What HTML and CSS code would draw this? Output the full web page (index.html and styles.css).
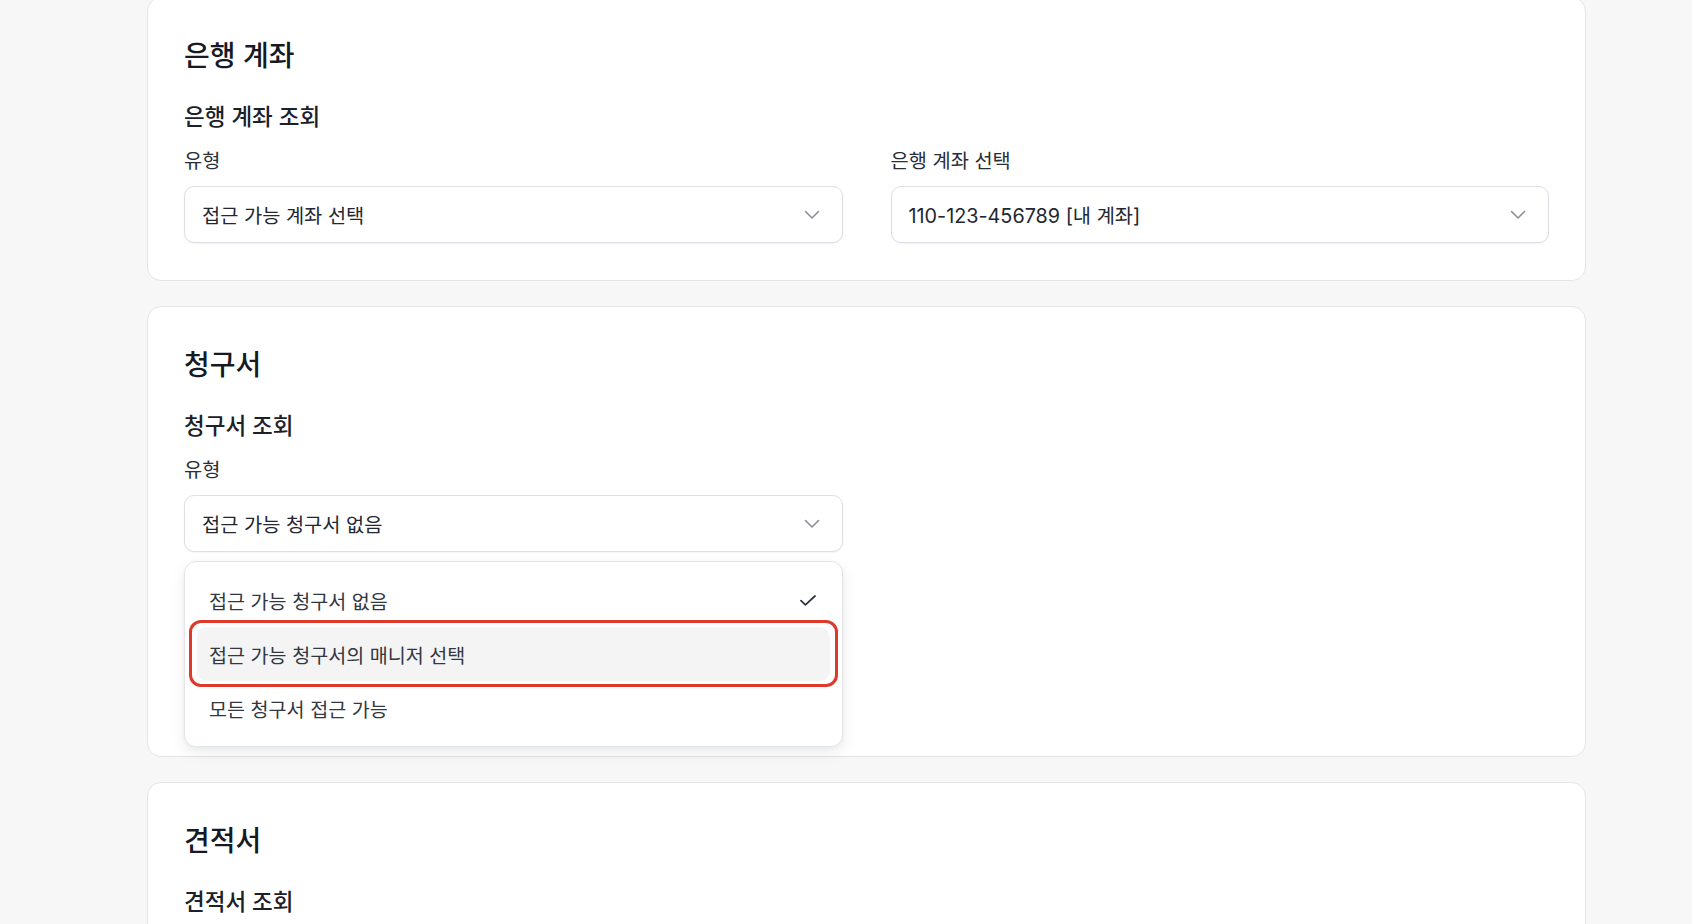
FILE: index.html
```html
<!DOCTYPE html>
<html lang="ko">
<head>
<meta charset="utf-8">
<title>접근 권한 설정</title>
<link rel="stylesheet" href="styles.css">
</head>
<body>
<main class="stack">
  <section class="card">
    <h2 class="card-title">은행 계좌</h2>
    <h3 class="group-title">은행 계좌 조회</h3>
    <div class="grid-2">
      <div class="field">
        <label class="field-label">유형</label>
        <div class="select">
          <span class="select-value">접근 가능 계좌 선택</span>
          <svg class="chevron" width="16" height="10" viewBox="0 0 16 10"><path d="M1.5 1.5L8 8l6.5-6.5" fill="none" stroke="#8b8f98" stroke-width="1.6" stroke-linecap="round" stroke-linejoin="round"/></svg>
        </div>
      </div>
      <div class="field">
        <label class="field-label">은행 계좌 선택</label>
        <div class="select">
          <span class="select-value">110-123-456789 [내 계좌]</span>
          <svg class="chevron" width="16" height="10" viewBox="0 0 16 10"><path d="M1.5 1.5L8 8l6.5-6.5" fill="none" stroke="#8b8f98" stroke-width="1.6" stroke-linecap="round" stroke-linejoin="round"/></svg>
        </div>
      </div>
    </div>
  </section>

  <section class="card card--open">
    <h2 class="card-title">청구서</h2>
    <h3 class="group-title">청구서 조회</h3>
    <div class="grid-2">
      <div class="field">
        <label class="field-label">유형</label>
        <div class="select">
          <span class="select-value">접근 가능 청구서 없음</span>
          <svg class="chevron" width="16" height="10" viewBox="0 0 16 10"><path d="M1.5 1.5L8 8l6.5-6.5" fill="none" stroke="#8b8f98" stroke-width="1.6" stroke-linecap="round" stroke-linejoin="round"/></svg>
        </div>
        <ul class="menu">
          <li class="menu-item">
            <span>접근 가능 청구서 없음</span>
            <svg class="check" width="16" height="11" viewBox="0 0 16 11"><path d="M1 5.6l4.4 4.2L15 1" fill="none" stroke="#2f3440" stroke-width="1.8" stroke-linecap="round" stroke-linejoin="round"/></svg>
          </li>
          <li class="menu-item menu-item--hover">
            <span>접근 가능 청구서의 매니저 선택</span>
            <span class="highlight"></span>
          </li>
          <li class="menu-item">
            <span>모든 청구서 접근 가능</span>
          </li>
        </ul>
      </div>
    </div>
  </section>

  <section class="card card--last">
    <h2 class="card-title">견적서</h2>
    <h3 class="group-title">견적서 조회</h3>
  </section>
</main>
</body>
</html>
```

FILE: styles.css
```css
* { box-sizing: border-box; }

html, body {
  margin: 0;
  padding: 0;
  height: 924px;
  overflow: hidden;
  background: #f7f7f8;
  font-family: Inter, "Noto Sans CJK KR", "Noto Sans", sans-serif;
  color: #1f2430;
}

.stack {
  display: flex;
  flex-direction: column;
  gap: 25px;
  width: 1439px;
  margin: -3px 0 0 147px;
}

.card {
  background: #ffffff;
  border: 1px solid #e4e5e9;
  border-radius: 14px;
  padding: 40px 36px 37px;
}

.card--open {
  padding-bottom: 9px;
}

.card--last {
  min-height: 300px;
}

.card-title {
  margin: 0;
  font-size: 28px;
  line-height: 36px;
  font-weight: 500;
  color: #161a24;
}

.group-title {
  margin: 28px 0 0;
  font-size: 22.5px;
  line-height: 30px;
  font-weight: 500;
  color: #1c2029;
}

.grid-2 {
  display: grid;
  grid-template-columns: 1fr 1fr;
  column-gap: 48px;
  margin-top: 16px;
}

.field {
  display: flex;
  flex-direction: column;
}

.field-label {
  font-size: 19.8px;
  line-height: 26px;
  font-weight: 400;
  color: #2a2e38;
}

.select {
  margin-top: 12px;
  height: 57px;
  display: flex;
  align-items: center;
  justify-content: space-between;
  padding: 0 22px 0 17px;
  background: #ffffff;
  border: 1px solid #dedfe4;
  border-radius: 10px;
  box-shadow: 0 1px 2px rgba(16, 24, 40, 0.05);
}

.select-value {
  font-size: 19.8px;
  color: #23272f;
}

.chevron { flex: none; }

.menu {
  list-style: none;
  margin: 9px 0 0;
  padding: 11px 12px;
  background: #ffffff;
  border: 1px solid #e4e5e9;
  border-radius: 12px;
  box-shadow: 0 6px 16px rgba(16, 24, 40, 0.08), 0 2px 4px rgba(16, 24, 40, 0.04);
}

.menu-item {
  position: relative;
  height: 54px;
  display: flex;
  align-items: center;
  justify-content: space-between;
  padding: 0 14px 0 12px;
  border-radius: 10px;
  font-size: 19.6px;
  color: #33373f;
}

.menu-item--hover {
  background: #f4f4f5;
}

.highlight {
  position: absolute;
  top: -7px;
  bottom: -6px;
  left: -8px;
  right: -8px;
  border: 3.5px solid #dd3a2c;
  border-radius: 12px;
  pointer-events: none;
}

.check { flex: none; }
```
